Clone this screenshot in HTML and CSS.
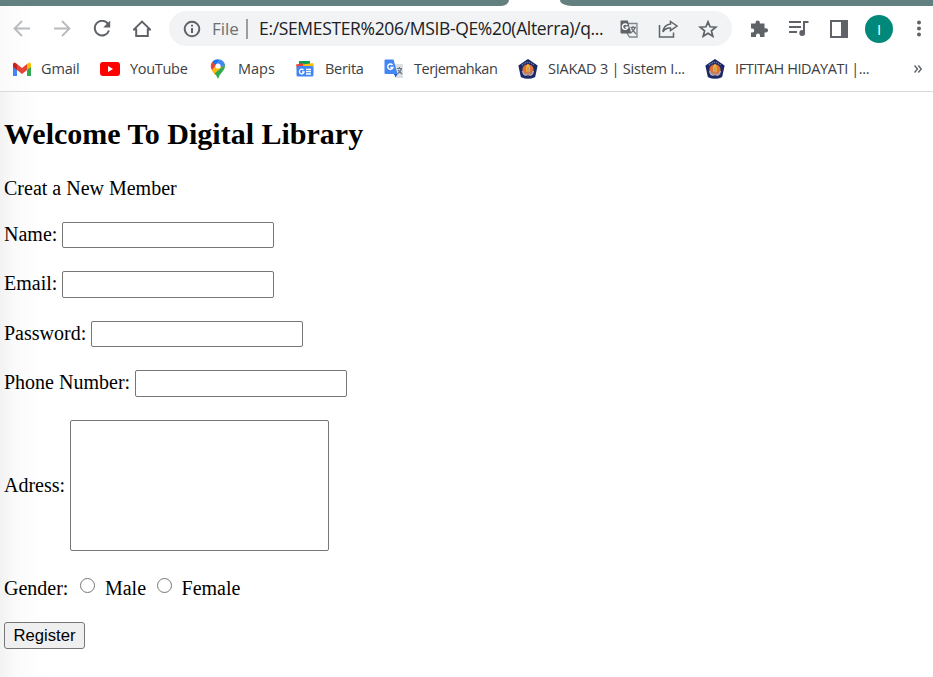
FILE: index.html
```html
<!DOCTYPE html>
<html lang="en">
<head>
<meta charset="utf-8">
<title>Digital Library</title>
<link rel="stylesheet" href="styles.css">
</head>
<body>
<svg width="0" height="0" class="defs"><defs>
<g id="crest">
<path d="M10 .8 18.800 6.800 16.500 17.500Q10 20.500 3.500 17.500L1.200 6.800z" fill="#1b2a66" stroke="#1b2a66" stroke-width="1.500" stroke-linejoin="round"/>
<path d="M4 6.300Q10 .500 16 6.300" fill="none" stroke="#8b91a8" stroke-width="1.200" stroke-dasharray="1 1"/>
<circle cx="10" cy="10.800" r="5.600" fill="#e0703c"/>
<path d="M4.500 12Q6 17.500 9.500 15.500M15.500 12Q14 17.500 10.500 15.500" fill="none" stroke="#b9b4c8" stroke-width="1.300"/>
<path d="M10 4.500 12 8.500 11.500 13H8.500L8 8.500z" fill="#f5bd32"/>
<path d="M10 8v6M7.500 14.500h5" stroke="#a8907c" stroke-width="1.300"/>
</g>
</defs></svg>
<header class="browser">
<div class="tabs"><div class="tab-left"></div><div class="tab-right"></div></div>
<div class="toolbar">
<nav class="nav">
<svg class="dim" width="18" height="18" viewBox="0 0 18 18"><path d="M17 8.500H2M9 1 1.500 8.500 9 16"/></svg>
<svg class="dim" width="18" height="18" viewBox="0 0 18 18"><path d="M1 8.500h15M9 1 16.500 8.500 9 16"/></svg>
<svg class="line" width="18" height="18" viewBox="0 0 18 18"><path d="M15 3.800A7.300 7.300 0 1 0 16 10.500"/><path class="solid" d="M17.200.500V7.500h-7z"/></svg>
<svg class="line" width="18" height="18" viewBox="0 0 18 18"><path d="M1 9.400 9 1.600l8 7.800h-2.200v6.600H3.200V9.400z"/></svg>
</nav>
<div class="omnibox">
<svg class="line info" width="18" height="18" viewBox="0 0 18 18"><circle cx="9" cy="9" r="7.300"/><path d="M9 8v5M9 4.800v1.800"/></svg>
<span class="scheme">File</span><i class="divider"></i><span class="url">E:/SEMESTER%206/MSIB-QE%20(Alterra)/q...</span>
<div class="actions">
<svg width="18" height="18" viewBox="0 0 18 18"><path d="M8 3.500h9v13.500H9.500L7 13z" fill="#f1f3f4" stroke="#80868b" stroke-width="1.300"/><path class="solid" d="M1.500.500h6.300l3.500 13H1.500Q.500 13.500.500 12.500v-11Q.500.500 1.500.500z"/><path d="M7.300 5A2.700 2.700 0 1 0 7.800 7.300H5.300" fill="none" stroke="#fff" stroke-width="1.400"/><path d="M10.500 7.500h5.500M13 6v1.500M15.200 7.500Q14 11 11 12.800M11.500 8.500l4.500 5.500" fill="none" stroke="#6f757a" stroke-width="1.300"/></svg>
<svg class="line" width="20" height="18" viewBox="0 0 20 18"><path d="M1.500 5v12h14v-4.500M12.500 1.500 19 6 12.500 10.500V8Q7.500 7.500 5 12 5.500 5 12.500 4z" stroke-width="1.500"/></svg>
<svg class="line" width="20" height="18" viewBox="0 0 20 18"><path d="m10 1.800 2.100 5 5.700.4-4.400 3.600 1.400 5.500-4.800-3-4.800 3 1.400-5.500-4.400-3.600 5.700-.4z" stroke-width="1.700"/></svg>
</div>
</div>
<div class="extensions">
<svg width="18" height="18" viewBox="0 0 18 18"><path class="solid" d="M0 3.500h4.500v-.8a2.200 2.200 0 0 1 4.400 0v.8H13.500v4.700H15a2.100 2.100 0 0 1 0 4.200h-1.500V17H9v-1.500a2 2 0 0 0-4 0V17H0v-4.500h1.200a2 2 0 0 0 0-4H0z"/></svg>
<svg class="line" width="20" height="18" viewBox="0 0 20 18"><path d="M0 2h12M0 7h12M0 12h8M15 12.500V2h4.500" stroke-width="2"/><circle class="solid" cx="13.200" cy="13" r="2.900"/></svg>
<svg width="18" height="18" viewBox="0 0 18 18"><path class="solid" fill-rule="evenodd" d="M0 0h18v18H0zM2 2v14h9V2z"/></svg>
<span class="avatar">I</span>
<svg width="4" height="18" viewBox="0 0 4 18"><g class="solid"><circle cx="2" cy="2.500" r="2"/><circle cx="2" cy="8.500" r="2"/><circle cx="2" cy="14.500" r="2"/></g></svg>
</div>
</div>
<nav class="bookmarks">
<a class="b1"><svg width="20" height="20" viewBox="0 0 20 20"><path d="M1 5v12h4V8z" fill="#4285f4"/><path d="M15 8v9h4V5z" fill="#34a853"/><path d="M15 5v6l4-3V5Q18 2 15 5z" fill="#fbbc04"/><path d="M5 5v6L1 8V5Q2 2 5 5z" fill="#c5221f"/><path d="m5 5 5 4 5-4v6l-5 4-5-4z" fill="#ea4335"/></svg><span>Gmail</span></a>
<a class="b2"><svg width="20" height="20" viewBox="0 0 20 20"><rect y="3" width="20" height="14" rx="3" fill="#f00"/><path d="m8 7 5 3-5 3z" fill="#fff"/></svg><span>YouTube</span></a>
<a class="b3"><svg width="20" height="20" viewBox="0 0 20 20"><path d="M4 3Q7-1 12 .700L7 7z" fill="#1a73e8"/><path d="M12 .600Q16 2 17 6l-6 4-2-6z" fill="#4285f4"/><path d="M4.200 2.800 8 6.500 4 11.500Q1.500 6.500 4.200 2.800z" fill="#ea4335"/><path d="m4 11.500 5-6 5 3-7.500 7z" fill="#fbbc04"/><path d="M17 5.500Q17.500 9 15 12q-4 4-5 8-1-3-3.500-5.500z" fill="#34a853"/><circle cx="10" cy="7" r="2.600" fill="#fff"/></svg><span>Maps</span></a>
<a class="b4"><svg width="20" height="20" viewBox="0 0 20 20"><path d="M4 2h11v7H4z" fill="#0c9d58"/><path d="m1 5.500 8-1.500v6H2z" fill="#ea4335"/><path d="m8 5.500 10-1.500 1 3-2 3H8z" fill="#ffc107"/><rect x="1.500" y="7" width="17" height="10.500" rx="1.500" fill="#4285f4"/><path d="M8.500 11A2.300 2.300 0 1 0 9 13H7M11 10.500h5M11 12.700h5M11 15h5" fill="none" stroke="#fff" stroke-width="1.300"/></svg><span>Berita</span></a>
<a class="b5"><svg width="20" height="20" viewBox="0 0 20 20"><path d="M8 5h11v14H12z" fill="#dce0e5"/><path d="M1.500.500h8l4 14.500H1.500Q.500 15 .500 14V1.500Q.500.500 1.500.500z" fill="#4285f4"/><path d="m10 15h3.500L11.500 18.500z" fill="#1a5bd7"/><path d="M8.500 6A2.700 2.700 0 1 0 9 8.500H6.300" fill="none" stroke="#fff" stroke-width="1.400"/><path d="M13 9.500h5M15.500 8v1.500M17.500 9.500Q16.500 13 13.500 15M14 11l4 4" fill="none" stroke="#697580" stroke-width="1.200"/></svg><span>Terjemahkan</span></a>
<a class="b6"><svg width="20" height="20" viewBox="0 0 20 20"><use href="#crest"/></svg><span>SIAKAD 3 | Sistem I...</span></a>
<a class="b7"><svg width="20" height="20" viewBox="0 0 20 20"><use href="#crest"/></svg><span>IFTITAH HIDAYATI |...</span></a>
<svg class="line more" width="8" height="8" viewBox="0 0 8 8"><path d="m.500.500 3 3.500-3 3.500M4.300.500l3 3.500-3 3.500" stroke-width="1.400"/></svg>
</nav>
</header>
<main>
<h2>Welcome To Digital Library</h2>
<p>Creat a New Member</p>
<form>
<div class="row"><label for="name">Name:</label><input id="name" type="text"></div>
<div class="row"><label for="email">Email:</label><input id="email" type="text"></div>
<div class="row"><label for="password">Password:</label><input id="password" type="password"></div>
<div class="row"><label for="phone">Phone Number:</label><input id="phone" type="text"></div>
<div class="row address"><label for="address">Adress:</label><textarea id="address"></textarea></div>
<div class="row gender"><span>Gender:</span><input id="male" name="gender" type="radio"><label for="male">Male</label><input id="female" name="gender" type="radio"><label for="female">Female</label></div>
<button type="button">Register</button>
</form>
</main>
</body>
</html>
```
FILE: styles.css
```css
* { box-sizing: border-box; }
body { margin: 0; height: 677px; overflow: hidden; background: linear-gradient(90deg, #f2f2f2 0, #fafafa 14px, #fdfdfd 30px, #fff 46px); font-family: "Liberation Serif", serif; font-size: 20px; color: #000; }
.defs { display: block; }
svg { flex: none; }
.browser { height: 92px; border-bottom: 1px solid #d9dadc; background: linear-gradient(90deg, #fafafa, #fff 32px); font-family: "Open Sans", sans-serif; }
.tabs { height: 6px; display: flex; justify-content: space-between; }
.tabs div { background: #638080; }
.tab-left { width: 509px; border-bottom-right-radius: 8px 6px; }
.tab-right { width: 373px; border-bottom-left-radius: 12px 6px; }
.toolbar { height: 45px; display: flex; align-items: center; }
.nav { display: flex; gap: 22px; padding-left: 12.5px; width: 169px; }
.line, .dim { fill: none; stroke: #5f6368; stroke-width: 2; }
.dim { stroke: #b8babd; stroke-width: 1.8; }
.solid { fill: #5f6368; stroke: none; }
.omnibox { width: 563px; height: 35px; border-radius: 18px; background: #f1f3f4; display: flex; align-items: center; padding-left: 14px; font-size: 17px; white-space: nowrap; }
.scheme { color: #6b6f74; margin-left: 11px; width: 34px; font-size: 17px; }
.divider { width: 2px; height: 20px; background: #9a9da1; }
.url { margin-left: 11px; width: 346px; color: #202124; font-size: 17.5px; letter-spacing: -.34px; }
.scheme, .url { padding-bottom: 1px; }
.actions { display: flex; gap: 20px; margin-left: 15px; }
.extensions { display: flex; align-items: center; padding-left: 19px; }
.extensions svg:nth-child(2) { margin-left: 20px; }
.extensions svg:nth-child(3) { margin-left: 21px; }
.avatar { width: 28px; height: 28px; border-radius: 50%; background: #00897b; color: #fff; font-size: 15px; line-height: 28px; text-align: center; margin: 0 24px 0 17px; }
.bookmarks { height: 35px; display: flex; align-items: center; padding-left: 12px; color: #3c4043; font-size: 14.5px; white-space: nowrap; }
.bookmarks a { display: flex; align-items: center; gap: 9px; }
.bookmarks span { line-height: 20px; padding-top: 1px; }
.b1 { width: 88px; letter-spacing: -.15px; }
.b2 { width: 108px; letter-spacing: -.3px; }
.b3 { width: 87px; }
.b4 { width: 89px; letter-spacing: -.3px; }
.b5 { width: 134px; letter-spacing: -.5px; }
.b6 { width: 187px; letter-spacing: -.22px; }
.b7 { width: 209px; letter-spacing: -.38px; }
.bookmarks .b2 span, .bookmarks .b3 span, .bookmarks .b4 span, .bookmarks .b5 span, .bookmarks .b6 span, .bookmarks .b7 span { margin-left: 1px; }
main { padding: 24px 4px 0; }
h2 { margin: 0; font-size: 30px; line-height: 35px; height: 61px; }
p { margin: 0; line-height: 23px; height: 44.75px; }
.row { display: flex; align-items: flex-start; gap: 5px; height: 49.5px; line-height: 23px; }
.row label, .row span { padding-top: 1px; }
.row input[type="text"], .row input[type="password"] { width: 212px; height: 26.25px; margin: 0; border: 1px solid #767676; border-radius: 2px; background: #fff; }
textarea { display: block; width: 259px; height: 131px; margin: 0; border: 1px solid #767676; border-radius: 2px; background: #fff; resize: none; }
.row.address { height: 156px; }
.address label { padding-top: 54px; }
.row.gender { height: 46.25px; gap: 0; }
.gender input { width: 15px; height: 15px; margin: 2px 9.5px 0 12px; }
.gender label + input { margin-left: 11px; }
button { display: block; width: 81px; height: 27px; margin: 0; padding: 0; border: 1px solid #767676; border-radius: 3px; background: #efefef; color: #000; font: 16.67px "Liberation Sans", sans-serif; }
```
